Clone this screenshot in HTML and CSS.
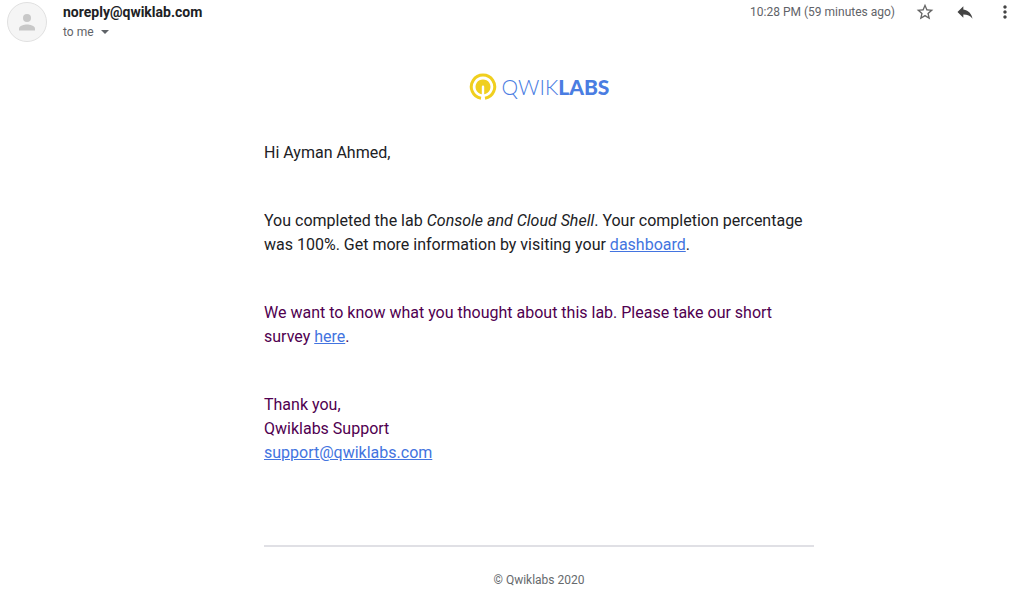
FILE: index.html
```html
<!DOCTYPE html>
<html lang="en">
<head>
<meta charset="utf-8">
<meta name="viewport" content="width=device-width, initial-scale=1">
<title>Qwiklabs message</title>
<link rel="stylesheet" href="styles.css">
</head>
<body>
<header class="header">
  <svg class="avatar" viewBox="0 0 40 40" aria-hidden="true">
    <circle cx="20" cy="20" r="19.5" fill="#f5f5f5" stroke="#e0e0e0"/>
    <circle cx="20" cy="16" r="4" fill="#c8c8c8"/>
    <path d="M12 28.500v-2c0-2.700 5.300-4 8-4s8 1.300 8 4v2z" fill="#c8c8c8"/>
  </svg>
  <div class="sender">
    <h1 class="sender-name">noreply@qwiklab.com</h1>
    <button class="recipient" type="button">to me
      <svg class="caret" viewBox="0 0 8 4" aria-hidden="true"><path d="M0 0h8L4 4z"/></svg>
    </button>
  </div>
  <div class="meta">
    <time class="date">10:28 PM (59 minutes ago)</time>
    <button class="action star" type="button" aria-label="Star">
      <svg viewBox="0 0 24 24"><path d="M22 9.240l-7.190-.62L12 2 9.190 8.630 2 9.240l5.460 4.730L5.820 21 12 17.270 18.180 21l-1.630-7.030L22 9.240zM12 15.400l-3.760 2.270 1-4.280-3.320-2.880 4.380-.38L12 6.100l1.710 4.040 4.380.38-3.320 2.880 1 4.280L12 15.400z"/></svg>
    </button>
    <button class="action" type="button" aria-label="Reply">
      <svg viewBox="0 0 24 24"><path d="M10 9V5l-7 7 7 7v-4.100c5 0 8.500 1.600 11 5.100-1-5-4-10-11-11z"/></svg>
    </button>
    <button class="action" type="button" aria-label="More">
      <svg viewBox="0 0 24 24"><path d="M12 8c1.100 0 2-.9 2-2s-.9-2-2-2-2 .9-2 2 .9 2 2 2zm0 2c-1.100 0-2 .9-2 2s.9 2 2 2 2-.9 2-2-.9-2-2-2zm0 6c-1.100 0-2 .9-2 2s.9 2 2 2 2-.9 2-2-.9-2-2-2z"/></svg>
    </button>
  </div>
</header>
<main class="message">
  <div class="content">
    <div class="logo">
      <svg class="logo-mark" viewBox="0 0 28 28" aria-hidden="true">
        <path d="M12 25.300A11.700 11.700 0 1 1 16 25.300" fill="none" stroke="#f0cf1e" stroke-width="3"/>
        <path d="M12.800 21.300V13.700a1.200 1.200 0 0 1 2.400 0v7.600a7.500 7.500 0 1 0-2.400 0z" fill="#f0cf1e"/>
      </svg>
      <span class="logo-text">QWIK<b>LABS</b></span>
    </div>
    <p>Hi Ayman Ahmed,</p>
    <p>You completed the lab <em>Console and Cloud Shell</em>. Your completion percentage was 100%. Get more information by visiting your <a href="#dashboard">dashboard</a>.</p>
    <p class="quoted">We want to know what you thought about this lab. Please take our short survey <a href="#survey">here</a>.</p>
    <p class="quoted">Thank you,<br>Qwiklabs Support<br><a href="mailto:support@qwiklabs.com">support@qwiklabs.com</a></p>
    <footer class="footer">© Qwiklabs 2020</footer>
  </div>
</main>
</body>
</html>
```
FILE: styles.css
```css
* {
  box-sizing: border-box;
}

body {
  margin: 0;
  background: #fff;
  color: #202124;
  font-family: Roboto, "Liberation Sans", sans-serif;
}

button {
  padding: 0;
  border: 0;
  background: none;
  font: inherit;
  cursor: pointer;
}

.header {
  display: flex;
  align-items: flex-start;
  padding: 2px 9px 0 7px;
}

.avatar {
  flex: none;
  width: 40px;
  height: 40px;
  margin-right: 16px;
}

.sender {
  flex: 1;
}

.sender-name {
  margin: 0;
  font-size: 14px;
  font-weight: 700;
  line-height: 20px;
}

.recipient {
  display: flex;
  align-items: center;
  gap: 7px;
  color: #5f6368;
  font-size: 12px;
  line-height: 20px;
}

.caret {
  width: 8px;
  height: 4px;
  fill: #5f6368;
}

.meta {
  display: flex;
  align-items: center;
  gap: 20px;
  color: #5f6368;
  font-size: 12px;
  line-height: 20px;
}

.action {
  display: flex;
  width: 20px;
  height: 20px;
  fill: #444;
}

.action svg {
  flex: none;
  width: 20px;
  height: 20px;
}

.star {
  fill: #666;
}

.message {
  padding: 0 9px 0 63px;
}

.content {
  max-width: 550px;
  margin: 0 auto;
  font-size: 16px;
  line-height: 24px;
}

.logo {
  display: flex;
  align-items: center;
  justify-content: center;
  gap: 5px;
  padding: 31px 0 40px;
}

.logo-mark {
  width: 28px;
  height: 28px;
}

.logo-text {
  color: #4a7de2;
  font-family: Lato, sans-serif;
  font-size: 21px;
  font-weight: 300;
  line-height: 28px;
}

.logo-text b {
  font-weight: 900;
}

.content p {
  margin: 0 0 44px;
}

.quoted {
  color: #500050;
}

.content a {
  color: #4374e0;
}

.content .footer {
  margin-top: 80px;
  padding-top: 23px;
  border-top: 2px solid #e0e0e5;
  color: #666a6d;
  font-size: 12px;
  line-height: 20px;
  text-align: center;
}
```
